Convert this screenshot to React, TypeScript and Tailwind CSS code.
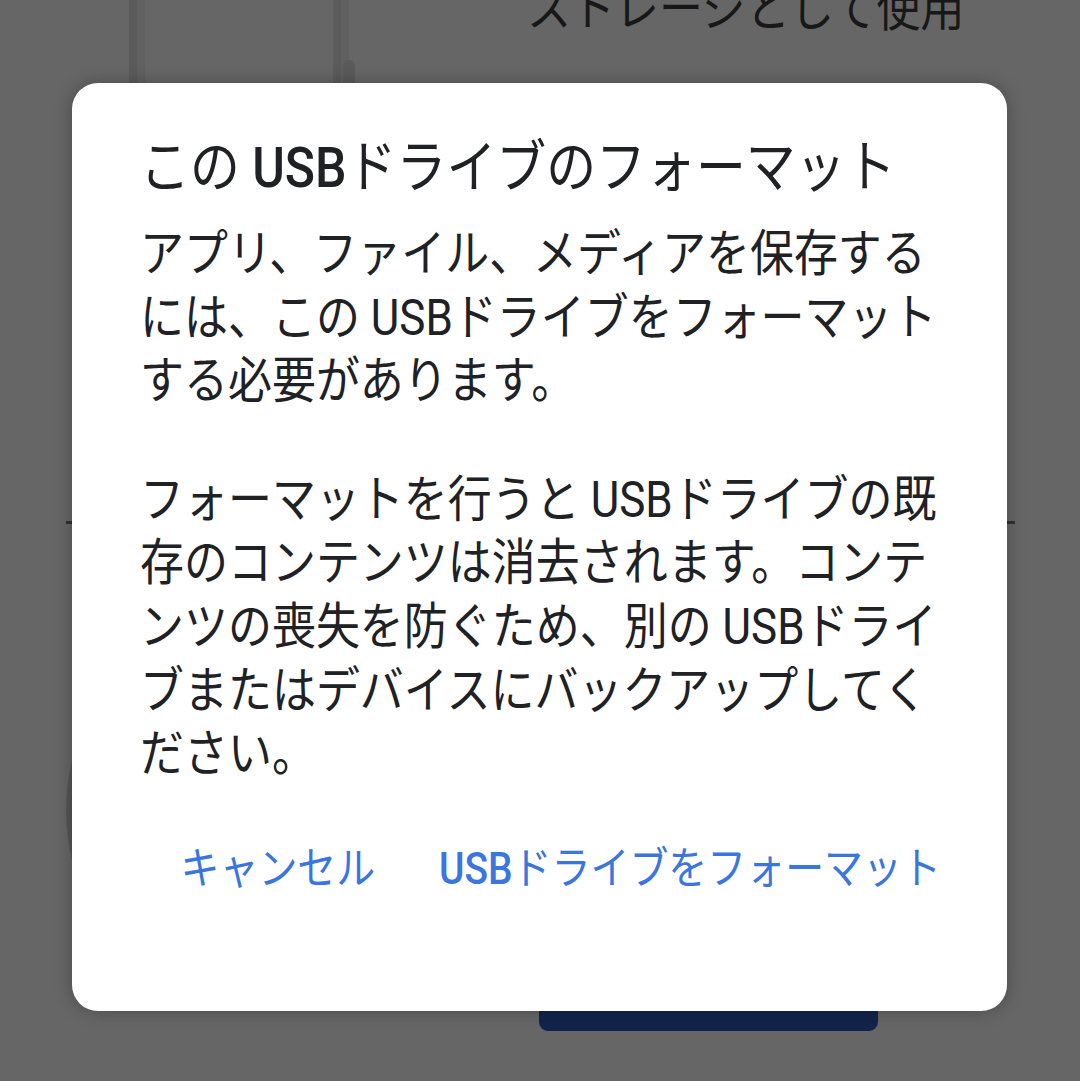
import React from 'react';

const FONT = { fontFamily: 'Roboto, "Noto Sans CJK JP", sans-serif' };

function BackPage() {
  return (
    <div className="flex h-[1081px] w-[1080px] flex-col bg-white">
      {/* top: illustration + heading, cut off by the screen edge */}
      <div className="flex h-[521px]">
        <svg className="ml-[129px] shrink-0" width="232" height="521" viewBox="0 0 232 521">
          <rect x="0" y="-40" width="16" height="560" fill="#e4e4e4" />
          <rect x="8" y="-40" width="8" height="560" fill="#f2f2f2" />
          <rect x="204" y="-40" width="16" height="560" fill="#e4e4e4" />
          <rect x="212" y="-40" width="8" height="560" fill="#f0f0f0" />
          <rect x="214" y="60" width="12" height="460" rx="5" fill="#e2e2e2" />
        </svg>
        <div className="-mt-[23px] ml-[166px] origin-top-left scale-x-[0.885] whitespace-nowrap text-[49.7px] leading-[64px] text-[#3c3c3c]">
          ストレージとして使用
        </div>
      </div>
      <div className="ml-[66px] h-[3px] w-[949px] bg-[#7a7a7a]" />
      <div className="flex flex-1 items-start">
        <svg className="ml-[66px] mt-[236px] shrink-0" width="120" height="100" viewBox="0 0 120 100">
          <path d="M6 0 Q-6 50 6 100 L120 100 L120 0 Z" fill="#d8d8d8" />
        </svg>
        <div className="ml-[353px] mt-[300px] h-[207px] w-[339px] rounded-b-[9px] bg-[#2f5bbb]" />
      </div>
    </div>
  );
}

function Dialog() {
  return (
    <div
      className="h-[928px] w-[935px] rounded-[26px] bg-white pl-[68px] pt-[53px] shadow-[0_0_18px_rgba(0,0,0,0.28)]"
      style={FONT}
    >
      <div className="w-[905px] origin-top-left scale-x-[0.885] text-[#202124]">
        <h2 className="whitespace-nowrap text-[56.4px] font-normal leading-[64px]">
          この <span className="font-medium">USB</span>ドライブのフォーマット
        </h2>
        <div className="mt-[23px] text-[49.7px] leading-[63.6px]">
          <p className="whitespace-nowrap">
            アプリ、ファイル、メディアを保存する
            <br />
            には、この USBドライブをフォーマット
            <br />
            する必要があります。
          </p>
          <p className="mt-[55px] whitespace-nowrap">
            フォーマットを行うと USBドライブの既
            <br />
            存のコンテンツは消去されます。コンテ
            <br />
            ンツの喪失を防ぐため、別の USBドライ
            <br />
            ブまたはデバイスにバックアップしてく
            <br />
            ださい。
          </p>
        </div>
        <div className="mt-[50px] flex justify-end gap-[72px] text-[44px] leading-[64px] text-[#3a76de]">
          <button className="whitespace-nowrap">キャンセル</button>
          <button className="whitespace-nowrap">
            <span className="font-medium">USB</span>ドライブをフォーマット
          </button>
        </div>
      </div>
    </div>
  );
}

export default function App() {
  return (
    <div className="relative h-[1081px] w-[1080px] overflow-hidden" style={FONT}>
      <BackPage />
      <div className="absolute inset-0 bg-black/60 pl-[72px] pt-[83px]">
        <Dialog />
      </div>
    </div>
  );
}
